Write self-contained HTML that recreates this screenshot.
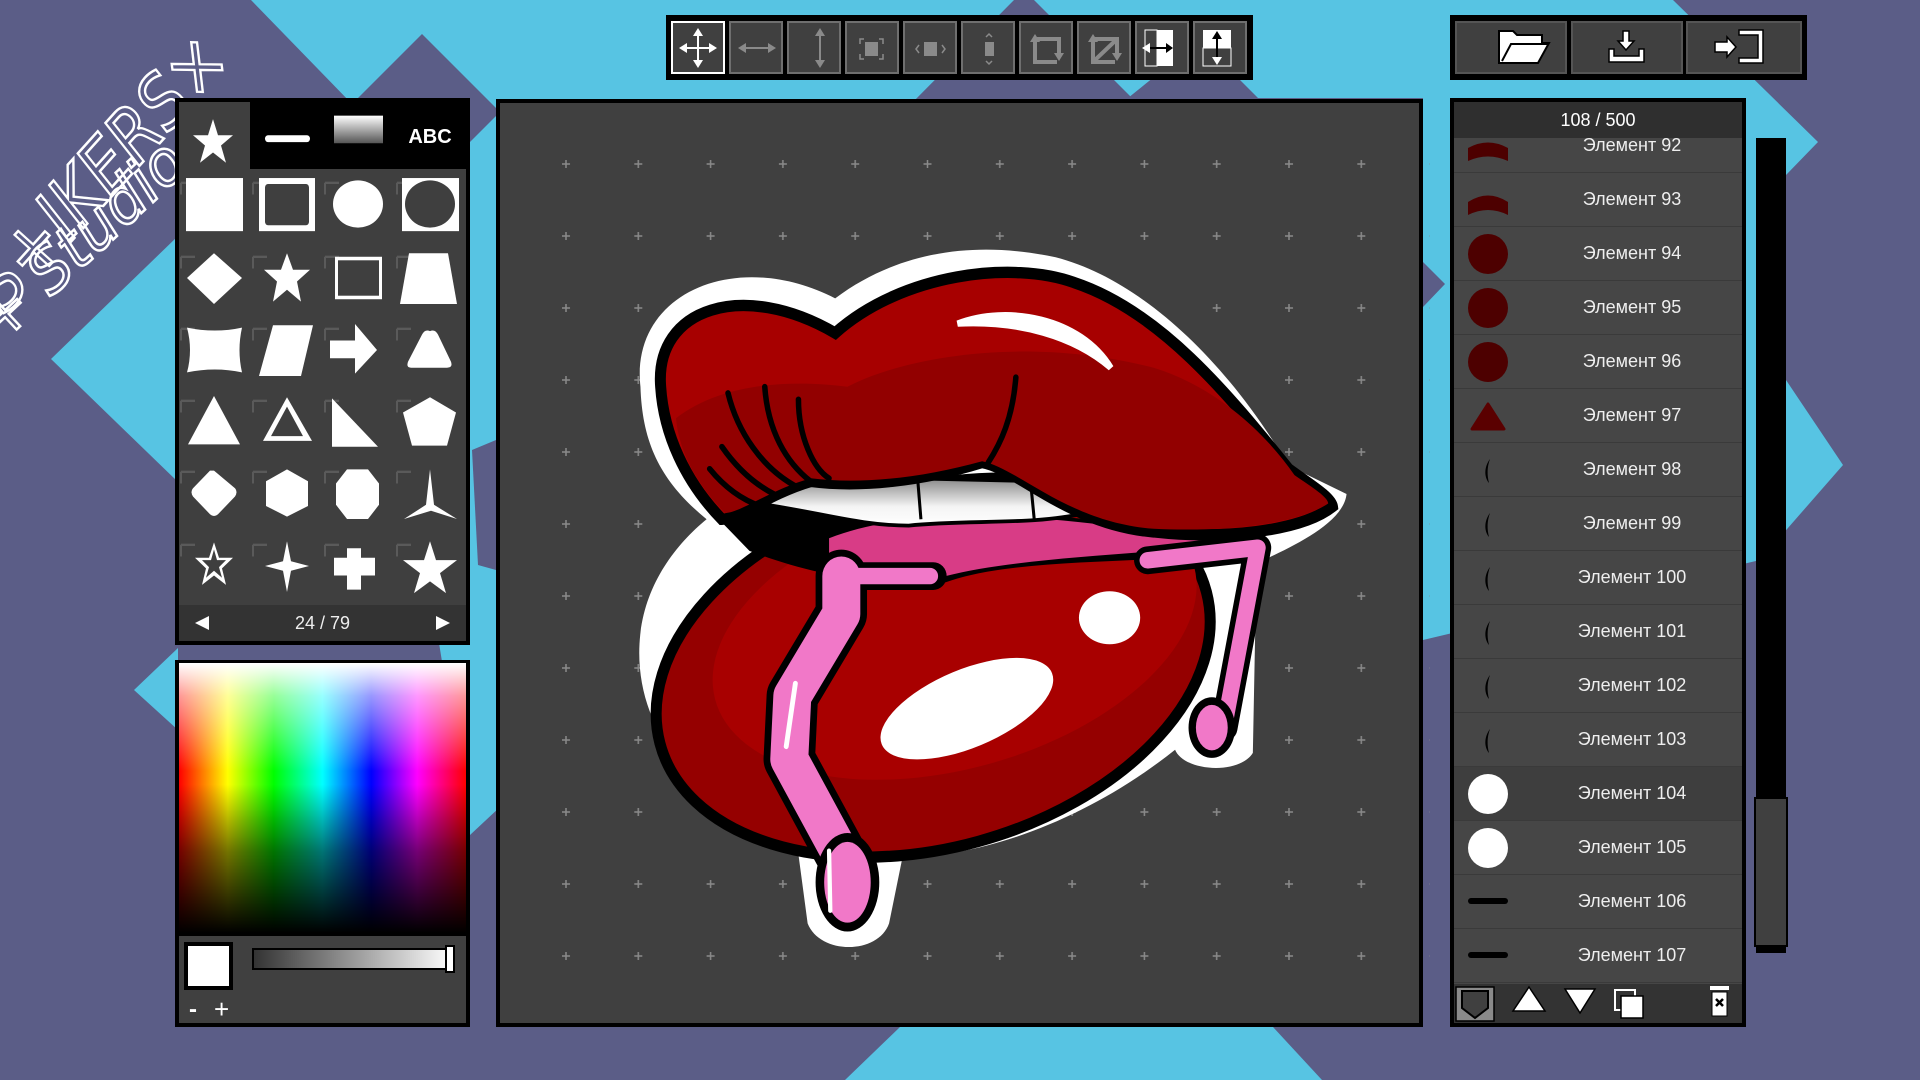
<!DOCTYPE html>
<html><head><meta charset="utf-8"><style>
*{margin:0;padding:0;box-sizing:border-box}
body{width:1920px;height:1080px;overflow:hidden;background:#5b5d87;font-family:"Liberation Sans",sans-serif;position:relative}
.abs{position:absolute}
.row{position:absolute;left:0;width:288px;height:54px;background:#464646;border-bottom:1px solid #3a3a3a}
.row span{position:absolute;left:0;width:288px;text-align:center;top:16px;color:#eee;font-size:18px;padding-left:68px}
.tb{position:absolute;top:6px;width:54px;height:53px;background:#404040;border:2px solid #6f6f6f}
.fb{position:absolute;top:6px;height:53px;background:#404040;border:2px solid #555}
</style></head><body>
<svg class="abs" style="left:0;top:0" width="1920" height="1080">
<g fill="#57c4e3">
<polygon points="251,0 1014,0 910,105 500,105 500,807 470,835 352,104"/>
<polygon points="178,236 51,359 178,482"/>
<polygon points="178,648 134,690 178,730"/>
<polygon points="1034,0 1673,0 1818,142 1786,175 1786,380 1843,465 1760,560 1423,640 1423,98 1132,98"/>
<polygon points="900,1027 1273,1027 1322,1080 845,1080"/>
</g>
<g fill="#5b5d87">
<polygon points="422,34 500,112 422,190 344,112"/>
<polygon points="1128,98 1200,40 1262,102"/>
<polygon points="1423,262 1445,284 1423,307"/>
<polygon points="472,450 496,440 496,570 478,565"/>
</g>
<g fill="none" stroke="#fff" stroke-width="2.5" font-family="DejaVu Sans, sans-serif" font-style="italic">
<text x="0" y="0" font-size="74" transform="translate(5,315) rotate(-48)" textLength="340" lengthAdjust="spacingAndGlyphs">S+IKERS×</text>
<text x="0" y="0" font-size="62" transform="translate(0,345) rotate(-43)" textLength="330" lengthAdjust="spacingAndGlyphs">+ Studio ×</text>
</g>
</svg>

<!-- Shapes panel -->
<div class="abs" style="left:175px;top:98px;width:295px;height:547px;background:#000">
 <div class="abs" style="left:4px;top:4px;width:71px;height:67px;background:#3f3f3f"></div>
 <div class="abs" style="left:4px;top:71px;width:287px;height:436px;background:#3f3f3f"></div>
 <div class="abs" style="left:4px;top:507px;width:287px;height:36px;background:#333"></div>
 <div class="abs" style="left:0;top:515px;width:295px;text-align:center;color:#eee;font-size:18px">24 / 79</div>
</div>
<svg class="abs" style="left:175px;top:98px" width="295" height="547">
 <defs><linearGradient id="gg" x1="0" y1="0" x2="0" y2="1"><stop offset="0" stop-color="#fff"/><stop offset="1" stop-color="#555"/></linearGradient></defs>
 <g transform="translate(0,5) scale(1,1.15)">
 <g fill="#fff">
 <polygon points="38,14 43,28 58,28 46,37 51,52 38,43 25,52 30,37 18,28 33,28"/>
 <rect x="90" y="28" width="45" height="6" rx="3"/>
 </g>
 <rect x="159" y="11" width="49" height="24" fill="url(#gg)"/>
 </g>
 <text x="255" y="45" fill="#fff" font-size="20" font-weight="bold" text-anchor="middle">ABC</text>
 <g fill="#fff">
 <g transform="translate(0,106) scale(1,1.18) translate(0,-85)">
 <path d="M6,67v10M6,67h14M78,67v10M78,67h14M150,67v10M150,67h14M222,67v10M222,67h14" fill="none" stroke="#5a5a5a" stroke-width="2"/>
 <rect x="11" y="63" width="57" height="45"/>
 <rect x="84" y="63" width="56" height="45"/><rect x="90" y="68" width="44" height="35" rx="3" fill="#3f3f3f"/>
 <ellipse cx="183" cy="85" rx="25" ry="20"/>
 <rect x="227" y="63" width="57" height="45"/><ellipse cx="255" cy="85" rx="25" ry="20" fill="#3f3f3f"/>
 </g>
 <g transform="translate(0,180) scale(1,1.18) translate(0,-142)">
 <path d="M6,124v10M6,124h14M78,124v10M78,124h14M150,124v10M150,124h14M222,124v10M222,124h14" fill="none" stroke="#5a5a5a" stroke-width="2"/>
 <polygon points="39,121 67,142 39,164 12,142"/>
 <polygon points="112,121 118,135 135,135 122,145 126,162 112,152 98,162 102,145 89,135 106,135"/>
 <rect x="160" y="124" width="47" height="36"/><rect x="163" y="127" width="41" height="30" fill="#3f3f3f"/>
 <polygon points="234,121 273,121 282,164 225,164"/>
 </g>
 <g transform="translate(0,252) scale(1,1.18) translate(0,-199)">
 <path d="M6,181v10M6,181h14M78,181v10M78,181h14M150,181v10M150,181h14M222,181v10M222,181h14" fill="none" stroke="#5a5a5a" stroke-width="2"/>
 <path d="M12,180 Q40,185 67,180 Q62,199 67,218 Q40,213 12,218 Q18,199 12,180Z"/>
 <polygon points="98,178 138,178 126,221 84,221"/>
 <polygon points="155,191 180,191 180,177 202,199 180,219 180,206 155,206"/>
 <path d="M255,183 Q260,181 263,186 L276,209 Q278,214 272,214 L236,214 Q231,214 233,209 L247,186Q250,181 255,183Z"/>
 </g>
 <g transform="translate(0,324) scale(1,1.18) translate(0,-256)">
 <path d="M6,238v10M6,238h14M78,238v10M78,238h14M150,238v10M150,238h14M222,238v10M222,238h14" fill="none" stroke="#5a5a5a" stroke-width="2"/>
 <polygon points="39,234 65,275 13,275"/>
 <polygon points="112,235 137,272 88,272"/><polygon points="112,243 128,268 96,268" fill="#3f3f3f"/>
 <polygon points="157,236 203,277 157,277"/>
 <polygon points="255,235 281,248 272,276 237,276 228,248"/>
 </g>
 <g transform="translate(0,395) scale(1,1.18) translate(0,-313)">
 <path d="M6,295v10M6,295h14M78,295v10M78,295h14M150,295v10M150,295h14M222,295v10M222,295h14" fill="none" stroke="#5a5a5a" stroke-width="2"/>
 <path d="M39,294 L60,309 Q63,312 60,316 L43,331 Q39,334 35,331 L18,316 Q15,312 18,309 L35,294Z"/>
 <polygon points="112,293 133,303 133,324 112,333 91,324 91,303"/>
 <polygon points="172,293 193,293 204,305 204,323 193,335 172,335 161,323 161,305"/>
 <path d="M255,293 L259,323 L282,335 L256,328 L229,335 L251,323Z"/>
 </g>
 <g transform="translate(0,468) scale(1,1.18) translate(0,-370)">
 <path d="M6,352v10M6,352h14M78,352v10M78,352h14M150,352v10M150,352h14M222,352v10M222,352h14" fill="none" stroke="#5a5a5a" stroke-width="2"/>
 <polygon points="39,350 44,363 58,363 47,372 51,386 39,378 27,386 31,372 20,363 34,363"/>
 <polygon points="39,356 42,365 51,365 44,371 47,380 39,374 31,380 34,371 27,365 36,365" fill="#3f3f3f"/>
 <polygon points="112,349 116,366 134,370 116,374 112,392 108,374 90,370 108,366"/>
 <polygon points="172,355 186,355 186,363 200,363 200,378 186,378 186,390 172,390 172,378 159,378 159,363 172,363"/>
 <polygon points="255,349 261,365 282,365 265,376 271,393 255,383 239,393 245,376 228,365 249,365"/>
 </g>
 <polygon points="20,525 34,518 34,532"/>
 <polygon points="275,525 261,518 261,532"/>
 </g>
</svg>

<!-- Color panel -->
<div class="abs" style="left:175px;top:660px;width:295px;height:367px;background:#000">
 <div class="abs" style="left:4px;top:3px;width:287px;height:270px;background:linear-gradient(90deg,#ff0000 0%,#ffff00 17%,#00ff00 33%,#00ffff 50%,#0000ff 67%,#ff00ff 83%,#ff0000 100%)"></div>
 <div class="abs" style="left:4px;top:3px;width:287px;height:270px;background:linear-gradient(180deg,#fff 0%,rgba(255,255,255,0.6) 12%,rgba(255,255,255,0) 40%,rgba(0,0,0,0) 45%,rgba(0,0,0,0.55) 70%,#000 100%)"></div>
 <div class="abs" style="left:4px;top:276px;width:287px;height:87px;background:#404040"></div>
 <div class="abs" style="left:9px;top:282px;width:49px;height:48px;background:#fff;border:4px solid #000"></div>
 <div class="abs" style="left:77px;top:288px;width:203px;height:22px;background:linear-gradient(90deg,#333,#fff);border:2px solid #000"></div>
 <div class="abs" style="left:270px;top:285px;width:10px;height:28px;background:#fff;border:2px solid #000"></div>
 <div class="abs" style="left:14px;top:336px;color:#fff;font-size:24px;font-weight:bold">-</div>
 <div class="abs" style="left:39px;top:334px;color:#fff;font-size:26px">+</div>
</div>

<!-- Canvas -->
<div class="abs" style="left:496px;top:99px;width:927px;height:928px;background:#404040;border:4px solid #000"></div>
<svg class="abs" style="left:0;top:0" width="1920" height="1080">
 <defs><pattern id="gp" x="561.5" y="159.5" width="72.3" height="72" patternUnits="userSpaceOnUse">
 <path d="M4.5,0.5v8M0.5,4.5h8" stroke="#8a8a8a" stroke-width="1.5"/></pattern>
 <linearGradient id="teeth" x1="0" y1="0" x2="0" y2="1"><stop offset="0" stop-color="#888"/><stop offset="0.6" stop-color="#f4f4f4"/><stop offset="1" stop-color="#fff"/></linearGradient></defs>
 <rect x="560" y="158" width="870" height="845" fill="url(#gp)"/>
 <g transform="translate(480,90) scale(0.6124,0.6313)">
  <path fill="#fff" d="M262,470 C245,320 420,250 580,330 C690,250 820,240 940,265 C1080,300 1220,430 1320,595 L1415,640 C1410,690 1310,730 1268,750 L1262,1050 C1240,1085 1150,1080 1135,1045 C1000,1150 830,1215 690,1215 L668,1320 C650,1370 555,1370 535,1320 L515,1175 C340,1130 245,1000 262,860 C272,780 320,720 370,680 C295,620 265,560 262,470Z"/>
  <ellipse cx="740" cy="915" rx="462" ry="285" transform="rotate(-15 740 915)" fill="#950000" stroke="#000" stroke-width="18"/>
  <ellipse cx="775" cy="860" rx="405" ry="215" transform="rotate(-15 775 860)" fill="#a80000"/>
  <path d="M390,680 C450,640 520,640 560,640 L1100,690 L1270,715 C1200,760 900,730 760,780 C640,790 520,760 440,730Z" fill="#000"/>
  <path d="M570,710 C700,660 900,670 1100,700 L1270,712 C1150,735 900,735 760,770 L680,760 C620,770 580,760 570,740Z" fill="#d83c86"/>
  <path d="M455,655 C520,620 600,615 700,615 L930,620 C960,640 980,660 990,670 C900,690 800,680 700,690 C620,690 560,670 455,655Z" fill="url(#teeth)" stroke="#000" stroke-width="6"/>
  <path d="M715,620 L720,680 M900,630 L905,680" stroke="#000" stroke-width="5"/>
  <path d="M295,470 C285,345 430,300 580,385 C690,290 870,270 970,305 C1110,350 1220,480 1320,600 C1355,625 1390,645 1392,660 C1340,700 1210,712 1100,700 C960,688 880,600 820,590 C720,620 620,630 540,620 C470,640 420,680 395,680 C335,620 300,545 295,470Z" fill="#a70000" stroke="#000" stroke-width="18"/>
  <path d="M320,520 C400,460 520,460 600,470 C700,420 900,390 1100,440 C1200,470 1280,540 1330,610 C1360,630 1385,645 1385,655 C1330,690 1210,700 1100,695 C960,685 880,600 820,588 C720,615 620,625 540,615 C470,635 425,670 400,670 C350,620 325,570 320,520Z" fill="#920000"/>
  <path d="M780,370 C860,340 980,360 1030,440 C970,390 880,365 780,370Z" fill="#fff" stroke="#fff" stroke-width="10"/>
  <g fill="none" stroke="#000" stroke-width="9" stroke-linecap="round">
   <path d="M405,480 C420,540 460,600 520,630"/><path d="M465,470 C470,540 500,590 540,620"/>
   <path d="M520,490 C520,550 545,600 570,615"/><path d="M395,565 C420,600 450,625 480,640"/>
   <path d="M375,600 C400,630 430,650 460,660"/><path d="M875,455 C870,520 850,560 830,590"/>
  </g>
  <ellipse cx="795" cy="980" rx="150" ry="62" transform="rotate(-22 795 980)" fill="#fff"/>
  <ellipse cx="1028" cy="836" rx="50" ry="42" fill="#fff"/>
  <g fill="none" stroke-linejoin="round" stroke-linecap="round">
   <path d="M590,770 L590,830 L510,960 L505,1060 L600,1230" stroke="#000" stroke-width="84"/>
   <path d="M590,770 L740,770" stroke="#000" stroke-width="44"/>
   <path d="M1090,745 L1270,725 L1215,1010" stroke="#000" stroke-width="44"/>
   <path d="M590,770 L590,830 L510,960 L505,1060 L600,1230" stroke="#f178c8" stroke-width="62"/>
   <path d="M595,770 L735,770" stroke="#f178c8" stroke-width="26"/>
   <path d="M1090,745 L1270,725 L1215,1010" stroke="#f178c8" stroke-width="26"/>
  </g>
  <ellipse cx="600" cy="1255" rx="52" ry="78" fill="#000"/>
  <ellipse cx="600" cy="1255" rx="38" ry="64" fill="#f178c8"/>
  <ellipse cx="1195" cy="1010" rx="38" ry="48" fill="#000"/>
  <ellipse cx="1195" cy="1010" rx="26" ry="36" fill="#f178c8"/>
  <path d="M515,940 L500,1040" stroke="#fff" stroke-width="8" stroke-linecap="round"/>
  <path d="M570,1205 L572,1300" stroke="#fff" stroke-width="7" stroke-linecap="round"/>
 </g>
</svg>

<!-- Toolbar -->
<div class="abs" style="left:666px;top:15px;width:587px;height:65px;background:#000">
 <div class="tb" style="left:5px;border-color:#fff"></div>
 <div class="tb" style="left:63px"></div><div class="tb" style="left:121px"></div><div class="tb" style="left:179px"></div>
 <div class="tb" style="left:237px"></div><div class="tb" style="left:295px"></div><div class="tb" style="left:353px"></div>
 <div class="tb" style="left:411px"></div><div class="tb" style="left:469px"></div><div class="tb" style="left:527px"></div>
</div>
<svg class="abs" style="left:666px;top:15px" width="587" height="65">
 <g fill="#fff" transform="translate(4,0)">
  <rect x="27" y="20" width="2" height="26"/><rect x="15" y="32" width="26" height="2"/>
  <polygon points="28,13 23,21 33,21"/><polygon points="28,53 23,45 33,45"/>
  <polygon points="9,33 17,28 17,38"/><polygon points="47,33 39,28 39,38"/>
 </g>
 <g fill="#8a8a8a">
  <g transform="translate(11,0)"><rect x="67" y="32" width="26" height="2"/><polygon points="61,33 69,28 69,38"/><polygon points="99,33 91,28 91,38"/></g>
  <g transform="translate(19,0)"><rect x="134" y="20" width="2" height="26"/><polygon points="135,13 130,21 140,21"/><polygon points="135,53 130,45 140,45"/></g>
  <g transform="translate(26,0)"><rect x="173" y="27" width="13" height="14"/>
  <path d="M168,29v-5h4M191,29v-5h-4M168,39v5h4M191,39v5h-4" fill="none" stroke="#8a8a8a" stroke-width="1.5"/></g>
  <g transform="translate(34,0)"><rect x="224" y="27" width="13" height="14"/>
  <path d="M219,30l-3,4 3,4M242,30l3,4-3,4" fill="none" stroke="#8a8a8a" stroke-width="1.5"/></g>
  <g transform="translate(41,0)"><rect x="278" y="27" width="9" height="14"/>
  <path d="M279,22l3,-3 3,3M279,46l3,3 3,-3" fill="none" stroke="#8a8a8a" stroke-width="1.5"/></g>
  <g transform="translate(49,0)"><path d="M320,27v20h22M322,24h22v14" fill="none" stroke="#8a8a8a" stroke-width="4"/>
  <polygon points="320,19 315,27 325,27"/><polygon points="344,46 339,38 349,38"/></g>
  <g transform="translate(56,0)"><path d="M371,27v20h22M373,24h22v14M373,45L393,26" fill="none" stroke="#8a8a8a" stroke-width="4"/>
  <polygon points="371,19 366,27 376,27"/><polygon points="395,46 390,38 400,38"/></g>
 </g>
 <g transform="translate(64,0)">
 <rect x="415" y="15" width="28" height="36" fill="#fff"/><rect x="415" y="15" width="12" height="36" fill="#404040" stroke="#fff" stroke-width="1"/>
 <path d="M418,33h20" stroke="#000" stroke-width="2"/><polygon points="443,33 436,28 436,38" fill="#000"/><polygon points="412,33 420,28 420,38" fill="#fff"/>
 </g>
 <g transform="translate(71,0)">
 <rect x="466" y="15" width="28" height="36" fill="#fff"/><rect x="466" y="33" width="28" height="18" fill="#404040" stroke="#fff" stroke-width="1"/>
 <path d="M480,22v24" stroke="#000" stroke-width="2"/><polygon points="480,16 475,24 485,24" fill="#000"/><polygon points="480,50 475,42 485,42" fill="#fff"/>
 </g>
</svg>

<!-- File bar -->
<div class="abs" style="left:1450px;top:15px;width:357px;height:65px;background:#000">
 <div class="fb" style="left:5px;width:112px"></div><div class="fb" style="left:121px;width:112px"></div><div class="fb" style="left:236px;width:116px"></div>
</div>
<svg class="abs" style="left:1450px;top:15px" width="357" height="65">
 <path d="M49,16h14l4,4h25v8h7l-11,20h-39Z" fill="#fff" stroke="#000" stroke-width="2"/>
 <path d="M52,46l9-17h38" fill="none" stroke="#000" stroke-width="2"/>
 <g fill="#fff" stroke="#000" stroke-width="1.5">
  <path d="M173,16h6v10h5l-8,9-8-9h5Z"/>
  <path d="M159,34h5v7h25v-7h5v13h-35Z"/>
  <path d="M289,15h24v33h-24v-5h19v-23h-19Z"/>
  <path d="M265,27h12v-5l9,10-9,10v-5h-12Z"/>
 </g>
</svg>

<!-- Layers panel -->
<div class="abs" style="left:1450px;top:98px;width:296px;height:929px;background:#000">
 <div class="abs" style="left:4px;top:4px;width:288px;height:36px;background:#2f2f2f;color:#fff;font-size:18px;text-align:center;line-height:36px">108 / 500</div>
 <div class="abs" style="left:4px;top:40px;width:288px;height:846px;overflow:hidden;background:#464646">
  <div style="position:absolute;left:0;top:-19px;width:288px">
   <div class="row" style="top:0"><span>Элемент 92</span></div>
   <div class="row" style="top:54px"><span>Элемент 93</span></div>
   <div class="row" style="top:108px"><span>Элемент 94</span></div>
   <div class="row" style="top:162px"><span>Элемент 95</span></div>
   <div class="row" style="top:216px"><span>Элемент 96</span></div>
   <div class="row" style="top:270px"><span>Элемент 97</span></div>
   <div class="row" style="top:324px"><span>Элемент 98</span></div>
   <div class="row" style="top:378px"><span>Элемент 99</span></div>
   <div class="row" style="top:432px"><span>Элемент 100</span></div>
   <div class="row" style="top:486px"><span>Элемент 101</span></div>
   <div class="row" style="top:540px"><span>Элемент 102</span></div>
   <div class="row" style="top:594px"><span>Элемент 103</span></div>
   <div class="row" style="top:648px;background:#3e3e3e"><span>Элемент 104</span></div>
   <div class="row" style="top:702px"><span>Элемент 105</span></div>
   <div class="row" style="top:756px"><span>Элемент 106</span></div>
   <div class="row" style="top:810px"><span>Элемент 107</span></div>
   <svg style="position:absolute;left:0;top:0" width="80" height="870">
    <path d="M14,29 Q34,18 54,29 L54,42 Q34,33 14,42Z" fill="#4d0000"/>
    <path d="M14,83 Q34,70 54,83 L54,96 Q34,86 14,96Z" fill="#4d0000"/>
    <circle cx="34" cy="135" r="20" fill="#4d0000"/>
    <circle cx="34" cy="189" r="20" fill="#4d0000"/>
    <circle cx="34" cy="243" r="20" fill="#4d0000"/>
    <path d="M34,285 L50,310 L18,310Z" fill="#5a0000" stroke="#5a0000" stroke-width="3" stroke-linejoin="round"/>
    <g fill="#000"><path d="M36,340 C30,348 30,358 35,364 C33,356 33,348 36,340Z"/>
    <path d="M36,394 C30,402 30,412 35,418 C33,410 33,402 36,394Z"/>
    <path d="M36,448 C30,456 30,466 35,472 C33,464 33,456 36,448Z"/>
    <path d="M36,502 C30,510 30,520 35,526 C33,518 33,510 36,502Z"/>
    <path d="M36,556 C30,564 30,574 35,580 C33,572 33,564 36,556Z"/>
    <path d="M36,610 C30,618 30,628 35,634 C33,626 33,618 36,610Z"/></g>
    <circle cx="34" cy="675" r="20" fill="#fff"/>
    <circle cx="34" cy="729" r="20" fill="#fff"/>
    <rect x="14" y="779" width="40" height="6" rx="3" fill="#000"/>
    <rect x="14" y="833" width="40" height="6" rx="3" fill="#000"/>
   </svg>
  </div>
 </div>
 <div class="abs" style="left:4px;top:886px;width:288px;height:39px;background:#333"></div>
</div>
<svg class="abs" style="left:1450px;top:984px" width="296" height="44">
 <rect x="6" y="3" width="38" height="34" fill="#8a8a8a" stroke="#000" stroke-width="1.5"/>
 <path d="M12,7h26v17l-13,10-13-10Z" fill="#404040" stroke="#000" stroke-width="2"/>
 <polygon points="79,3 95,27 63,27" fill="#fff" stroke="#000" stroke-width="1.5"/>
 <polygon points="115,5 145,5 130,29" fill="#fff" stroke="#000" stroke-width="1.5"/>
 <rect x="165" y="6" width="20" height="20" fill="#333" stroke="#fff" stroke-width="2"/>
 <rect x="171" y="12" width="22" height="22" fill="#fff" stroke="#000" stroke-width="1.5"/>
 <rect x="260" y="2" width="19" height="4" fill="#fff"/>
 <path d="M262,8h15v24h-15Z" fill="#fff" stroke="#000" stroke-width="1"/>
 <path d="M266,15l7,7M273,15l-7,7" stroke="#000" stroke-width="2.5"/>
</svg>

<!-- Scrollbar -->
<div class="abs" style="left:1756px;top:138px;width:30px;height:815px;background:#000"></div>
<div class="abs" style="left:1754px;top:797px;width:34px;height:150px;background:#404040;border:2px solid #000"></div>
</body></html>
